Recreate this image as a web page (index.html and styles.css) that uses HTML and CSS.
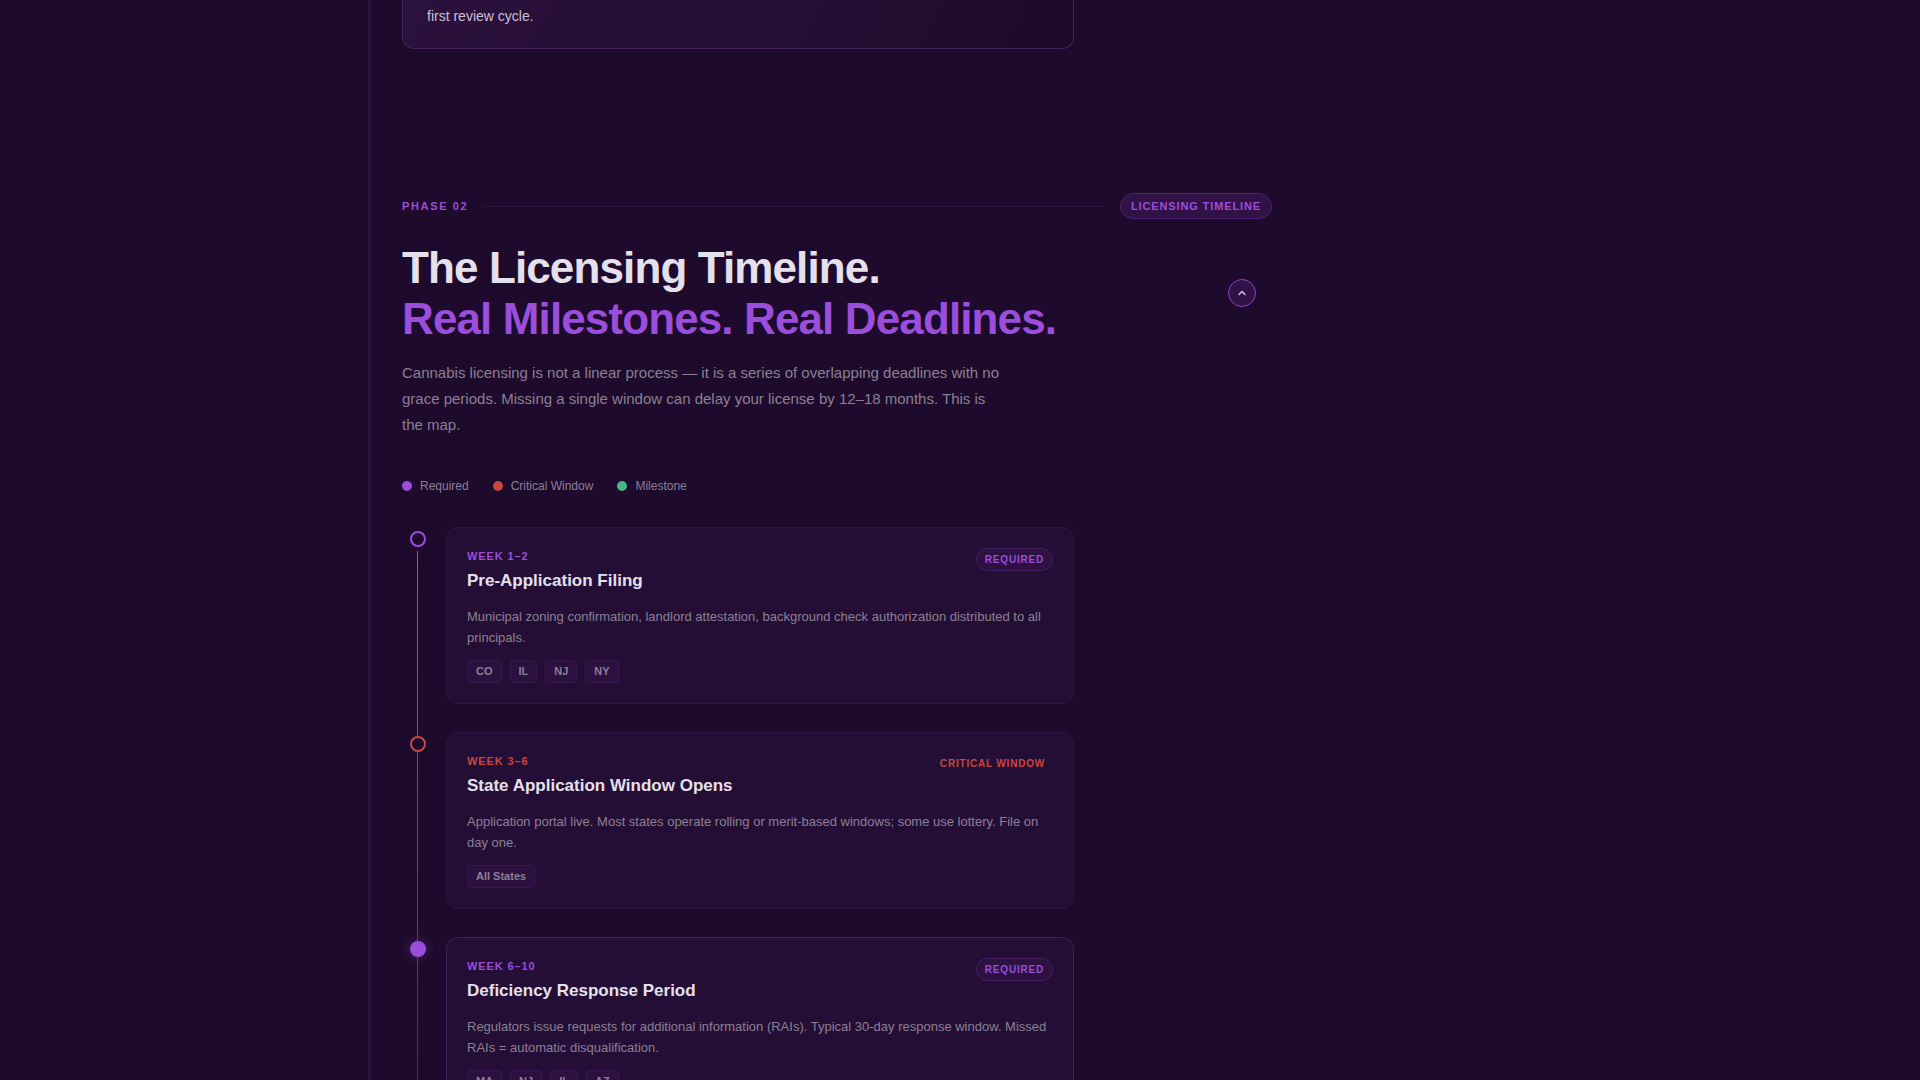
FILE: index.html
```html
<!DOCTYPE html>
<html lang="en">
<head>
<meta charset="utf-8">
<meta name="viewport" content="width=device-width, initial-scale=1">
<title>The Licensing Timeline</title>
<link rel="stylesheet" href="styles.css">
</head>
<body>
<main class="page">
  <div class="track">
    <aside class="callout"><p>first review cycle.</p></aside>

    <section class="phase" aria-labelledby="phase-title">
      <div class="phase-bar">
        <span class="phase-number">PHASE 02</span>
        <span class="phase-rule"></span>
        <span class="phase-pill">LICENSING TIMELINE</span>
      </div>
      <div class="phase-head">
        <h2 class="phase-title" id="phase-title">The Licensing Timeline.<br><span class="accent">Real Milestones. Real Deadlines.</span></h2>
        <button class="collapse" type="button" aria-label="Collapse section">
          <svg width="12" height="12" viewBox="0 0 12 12" fill="none" stroke="currentColor" stroke-width="1.5" stroke-linecap="round" stroke-linejoin="round"><path d="M3 7.5l3-3 3 3"/></svg>
        </button>
      </div>
      <p class="intro">Cannabis licensing is not a linear process — it is a series of overlapping deadlines with no grace periods. Missing a single window can delay your license by 12–18 months. This is the map.</p>

      <ul class="legend">
        <li><span class="dot"></span>Required</li>
        <li><span class="dot dot-critical"></span>Critical Window</li>
        <li><span class="dot dot-milestone"></span>Milestone</li>
      </ul>

      <ol class="timeline">
        <li class="step">
          <span class="node"></span>
          <article class="card">
            <header class="card-head">
              <div>
                <p class="week">WEEK 1–2</p>
                <h3 class="card-title">Pre-Application Filing</h3>
              </div>
              <span class="badge">REQUIRED</span>
            </header>
            <p class="desc">Municipal zoning confirmation, landlord attestation, background check authorization distributed to all principals.</p>
            <ul class="tags"><li>CO</li><li>IL</li><li>NJ</li><li>NY</li></ul>
          </article>
        </li>
        <li class="step">
          <span class="node node-critical"></span>
          <article class="card">
            <header class="card-head">
              <div>
                <p class="week week-critical">WEEK 3–6</p>
                <h3 class="card-title">State Application Window Opens</h3>
              </div>
              <span class="badge badge-critical">CRITICAL WINDOW</span>
            </header>
            <p class="desc">Application portal live. Most states operate rolling or merit-based windows; some use lottery. File on day one.</p>
            <ul class="tags"><li>All States</li></ul>
          </article>
        </li>
        <li class="step">
          <span class="node node-active"></span>
          <article class="card card-active">
            <header class="card-head">
              <div>
                <p class="week">WEEK 6–10</p>
                <h3 class="card-title">Deficiency Response Period</h3>
              </div>
              <span class="badge">REQUIRED</span>
            </header>
            <p class="desc">Regulators issue requests for additional information (RAIs). Typical 30-day response window. Missed RAIs = automatic disqualification.</p>
            <ul class="tags"><li>MA</li><li>NJ</li><li>IL</li><li>AZ</li></ul>
          </article>
        </li>
      </ol>
    </section>
  </div>
</main>
</body>
</html>
```
FILE: styles.css
```css
:root {
  --bg: #1e0a2c;
  --card: #250e35;
  --line: #2d1540;
  --accent: #9b4ddb;
  --critical: #c9473f;
  --milestone: #48b584;
  --text: #e4e0ec;
  --muted: #8b8094;
}

* { box-sizing: border-box; }

body {
  margin: 0;
  background: var(--bg);
  color: var(--text);
  font-family: "Liberation Sans", Arial, sans-serif;
}

h2, h3, p, ul, ol { margin: 0; padding: 0; }
ul, ol { list-style: none; }

.page {
  max-width: 1184px;
  margin: 0 auto;
}

.track {
  max-width: 904px;
  border-left: 3px solid #2b1340;
  padding-left: 31px;
}

.callout {
  max-width: 672px;
  padding: 4px 24px 20px;
  border: 1px solid #43235c;
  border-top: 0;
  border-radius: 0 0 12px 12px;
  background: linear-gradient(120deg, #2b113d, #260e34 50%, var(--bg));
  color: #c9c0d2;
  font-size: 14px;
  line-height: 24px;
}

.phase { padding: 144px 0 96px; }

.phase-bar {
  display: flex;
  align-items: center;
  gap: 16px;
  margin-bottom: 23px;
}

.phase-number {
  color: var(--accent);
  font-size: 11px;
  font-weight: 700;
  letter-spacing: 0.15em;
}

.phase-rule {
  flex: 1;
  height: 1px;
  background: var(--line);
}

.phase-pill {
  padding: 4px 10px;
  border: 1px solid #4a2369;
  border-radius: 13px;
  background: #301246;
  color: var(--accent);
  font-size: 11px;
  font-weight: 700;
  line-height: 16px;
  letter-spacing: 0.08em;
}

.phase-head {
  display: flex;
  align-items: center;
  justify-content: space-between;
  padding-right: 16px;
  margin-bottom: 16px;
}

.phase-title {
  font-size: 44px;
  line-height: 51px;
  letter-spacing: -0.02em;
}

.accent { color: var(--accent); }

.collapse {
  display: grid;
  place-items: center;
  width: 28px;
  height: 28px;
  padding: 0;
  border: 1px solid #8a45c3;
  border-radius: 50%;
  background: #301246;
  color: #cfc5d8;
}

.intro {
  max-width: 600px;
  margin-bottom: 39px;
  color: var(--muted);
  font-size: 15px;
  line-height: 26px;
}

.legend {
  display: flex;
  gap: 24px;
  margin-bottom: 32px;
  color: var(--muted);
  font-size: 12px;
  line-height: 18px;
}

.legend li {
  display: flex;
  align-items: center;
  gap: 8px;
}

.dot {
  width: 10px;
  height: 10px;
  border-radius: 50%;
  background: var(--accent);
}

.dot-critical { background: var(--critical); }
.dot-milestone { background: var(--milestone); }

.timeline {
  position: relative;
  display: grid;
  gap: 28px;
  max-width: 672px;
}

.timeline::before {
  content: "";
  position: absolute;
  top: 24px;
  bottom: 0;
  left: 15px;
  width: 1px;
  background: linear-gradient(var(--accent), #4a2369);
}

.step {
  display: grid;
  grid-template-columns: 32px 1fr;
  column-gap: 12px;
}

.node {
  position: relative;
  justify-self: center;
  width: 16px;
  height: 16px;
  margin-top: 4px;
  border: 2px solid var(--accent);
  border-radius: 50%;
  background: var(--bg);
}

.node-critical { border-color: var(--critical); }

.node-active {
  background: var(--accent);
  box-shadow: 0 0 12px #9b4ddb66;
}

.card {
  padding: 20px;
  border: 1px solid #2f1543;
  border-radius: 12px;
  background: var(--card);
}

.card-active { border-color: #43215d; }

.card-head {
  display: flex;
  align-items: flex-start;
  justify-content: space-between;
  margin-bottom: 13px;
}

.week {
  margin-bottom: 5px;
  color: var(--accent);
  font-size: 11px;
  font-weight: 700;
  line-height: 16px;
  letter-spacing: 0.08em;
}

.week-critical { color: var(--critical); }

.card-title {
  font-size: 17px;
  line-height: 24px;
}

.badge {
  padding: 3px 8px;
  border: 1px solid #43205f;
  border-radius: 12px;
  background: #2e1143;
  color: var(--accent);
  font-size: 10px;
  font-weight: 700;
  line-height: 15px;
  letter-spacing: 0.08em;
}

.badge-critical {
  border: 0;
  background: none;
  color: var(--critical);
}

.desc {
  margin-bottom: 12px;
  color: var(--muted);
  font-size: 13px;
  line-height: 21px;
}

.tags {
  display: flex;
  gap: 8px;
}

.tags li {
  padding: 2px 8px;
  border: 1px solid #35174b;
  border-radius: 3px;
  background: #2c1040;
  color: var(--muted);
  font-size: 11px;
  font-weight: 700;
  line-height: 17px;
}
```
